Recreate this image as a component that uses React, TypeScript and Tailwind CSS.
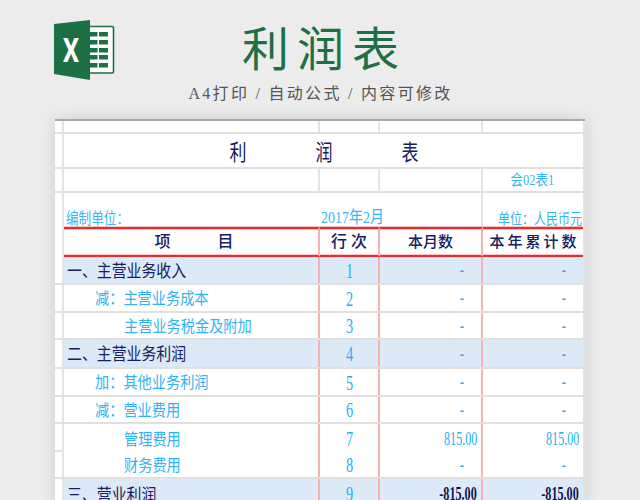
const CJK = "font-['Liberation_Serif','Noto_Sans_CJK_SC',serif]";
const COLS = "grid grid-cols-[9px_256px_60px_103px_100px_2px]";
const RED = "border-y-2 border-y-[#ee2a31] shadow-[0_-1px_0_#fbc4c4,0_1px_0_#fbc4c4,inset_0_1px_0_#fbc4c4,inset_0_-1px_0_#fbc4c4]";
const COLON = "\uFF1A";
const Stub = () => <div className="border-r-2 border-[#e4e4e4]" />;
const Tail = () => <div className="border-l-2 border-[#e4e4e4]" />;

type R = { h: string; label: string; indent: string; n: number; a: string; b: string; strong?: boolean };
const rows: R[] = [
  { h: "h-[28px]", label: "一、主营业务收入", indent: "pl-[3px]", n: 1, a: "-", b: "-", strong: true },
  { h: "h-[28px]", label: `减${COLON}主营业务成本`, indent: "pl-[31px]", n: 2, a: "-", b: "-" },
  { h: "h-[27px]", label: "主营业务税金及附加", indent: "pl-[60px]", n: 3, a: "-", b: "-" },
  { h: "h-[29px]", label: "二、主营业务利润", indent: "pl-[3px]", n: 4, a: "-", b: "-", strong: true },
  { h: "h-[28px]", label: `加${COLON}其他业务利润`, indent: "pl-[31px]", n: 5, a: "-", b: "-" },
  { h: "h-[27px]", label: `减${COLON}营业费用`, indent: "pl-[31px]", n: 6, a: "-", b: "-" },
  { h: "h-[28px]", label: "管理费用", indent: "pl-[60px]", n: 7, a: "815.00", b: "815.00" },
  { h: "h-[27px]", label: "财务费用", indent: "pl-[60px]", n: 8, a: "-", b: "-" },
  { h: "h-[28px]", label: "三、营业利润", indent: "pl-[3px]", n: 9, a: "-815.00", b: "-815.00", strong: true },
];

function Num({ v, strong }: { v: string; strong?: boolean }) {
  if (v === "-") {
    return <span className="pr-[17px] pt-[2px] font-['Liberation_Sans',sans-serif] text-[13px] font-bold text-[#1fb0f6]">-</span>;
  }
  return (
    <span className={`inline-block origin-right scale-x-[.64] pr-[6px] pt-[1px] font-['Liberation_Serif',serif] text-[19px] ${strong ? "font-bold text-[#0c1450]" : "text-[#25aef6]"}`}>
      {v}
    </span>
  );
}

function Logo() {
  return (
    <svg width="62" height="62" viewBox="54 19 62 62" className="shrink-0">
      <rect x="86" y="26.5" width="27.5" height="46.5" rx="1.5" fill="#fff" stroke="#1d7044" strokeWidth="1.6" />
      {[32, 40, 48, 55, 63].map((y) => (
        <g key={y} fill="#1d7044">
          <rect x="90" y={y} width="7.5" height="4.5" />
          <rect x="99" y={y} width="9" height="4.5" />
        </g>
      ))}
      <path d="M54 24 L90 20 L90 80 L54 74 Z" fill="#1d7044" />
      <text transform="translate(71 62) scale(.78 1)" textAnchor="middle" fontFamily="Roboto, sans-serif" fontWeight="700" fontSize="33" fill="#fff">X</text>
    </svg>
  );
}

export default function App() {
  return (
    <div className={`h-[500px] w-[640px] overflow-hidden bg-[#ececec] ${CJK}`}>
      <header className="flex h-[119px] pl-[54px] pt-[19px]">
        <Logo />
        <div className="flex w-[409px] flex-col items-center">
          <h1 className="h-[60px] pl-[8px] text-[47px] font-normal leading-[62px] tracking-[8px] text-[#1d7044]">利润表</h1>
          <p className="mt-[5px] text-[16px] leading-[20px] tracking-[2.3px] text-[#555]">A4打印 / 自动公式 / 内容可修改</p>
        </div>
      </header>

      <main className="ml-[55px] w-[530px] border-t-2 border-[#a9a9a9] bg-white shadow-[0_0_14px_rgba(0,0,0,0.13)]">
        <div className={`${COLS} h-[13px] border-b-2 border-[#e0e0e0]`}>
          <Stub />
          <div className="border-r-2 border-[#e4e4e4]" />
          <div className="border-r-2 border-[#e4e4e4]" />
          <div className="border-r-2 border-[#e4e4e4]" />
          <div />
          <Tail />
        </div>
        <div className={`${COLS} h-[35px] border-b-2 border-[#e0e0e0]`}>
          <Stub />
          <div className="col-span-4 flex items-center justify-center gap-[69px] pl-[1px] pt-[3px]">
            {["利", "润", "表"].map((c) => (
              <span key={c} className="inline-block scale-y-[1.3] text-[17px] font-normal leading-none text-[#14205f]">{c}</span>
            ))}
          </div>
          <Tail />
        </div>
        <div className={`${COLS} h-[24px] border-b-2 border-[#e0e0e0]`}>
          <Stub />
          <div className="border-r-2 border-[#e4e4e4]" />
          <div className="border-r-2 border-[#e4e4e4]" />
          <div className="border-r-2 border-[#e4e4e4]" />
          <div className="flex items-center justify-center pr-[1px]">
            <span className="inline-block scale-y-[1.2] text-[12.5px] leading-[20px] text-[#36b6f6]">会02表1</span>
          </div>
          <Tail />
        </div>
        <div className={`${COLS} h-[34px]`}>
          <Stub />
          <div className="flex items-end pl-[2px]">
            <span className="mb-[-2px] inline-block origin-bottom scale-y-[1.25] text-[12.6px] leading-[16px] text-[#36b6f6]">{`编制单位${COLON}`}</span>
          </div>
          <div className="col-span-2 flex items-end border-r-2 border-[#e4e4e4] pl-[1px]">
            <span className="mb-[-1px] inline-block origin-bottom scale-y-[1.2] text-[14px] leading-[17px] text-[#36b6f6]">2017年2月</span>
          </div>
          <div className="flex items-end justify-end whitespace-nowrap pr-[1px]">
            <span className="mb-[-2px] inline-block origin-bottom scale-y-[1.25] text-[12px] leading-[16px] text-[#36b6f6]">{`单位${COLON}人民币元`}</span>
          </div>
          <Tail />
        </div>

        <div className={`${COLS} h-[30px]`}>
          <Stub />
          <div className={`flex items-center justify-center gap-[47px] border-r-2 border-r-[#f6b2b2] pl-[6px] text-[16px] font-medium text-[#14205f] ${RED}`}>
            <span>项</span>
            <span>目</span>
          </div>
          <div className={`flex items-center justify-center gap-[4px] border-r-2 border-r-[#f6b2b2] text-[16px] font-medium text-[#14205f] ${RED}`}>
            <span>行</span>
            <span>次</span>
          </div>
          <div className={`flex items-center justify-center border-r-2 border-r-[#f6b2b2] text-[15px] font-medium text-[#14205f] ${RED}`}>本月数</div>
          <div className={`flex items-center justify-center gap-[3px] text-[15px] font-medium text-[#14205f] ${RED}`}>
            {["本", "年", "累", "计", "数"].map((c) => (
              <span key={c}>{c}</span>
            ))}
          </div>
          <Tail />
        </div>

        {rows.map((r) => {
          const bg = r.strong ? "bg-[#dce9f7]" : "bg-white";
          return (
            <div key={r.n} className={`${COLS} ${r.h} border-b-2 border-[#e0e0e0]`}>
              <Stub />
              <div className={`flex items-center whitespace-nowrap pt-[2px] ${r.indent} ${bg} border-r-2 border-[#f6b2b2]`}>
                <span className={`inline-block scale-y-[1.15] ${r.strong ? "text-[14.9px] text-[#14205f]" : "text-[14.2px] text-[#2fb2f6]"}`}>{r.label}</span>
              </div>
              <div className={`flex items-center justify-center border-r-2 border-[#f6b2b2] pt-[1px] ${bg}`}>
                <span className="inline-block scale-x-[.65] font-['Liberation_Serif',serif] text-[22px] leading-none text-[#25aef6]">{r.n}</span>
              </div>
              <div className={`flex items-center justify-end border-r-2 border-[#f6b2b2] ${bg}`}>
                <Num v={r.a} strong={r.strong} />
              </div>
              <div className={`flex items-center justify-end ${bg}`}>
                <Num v={r.b} strong={r.strong} />
              </div>
              <Tail />
            </div>
          );
        })}
      </main>
    </div>
  );
}
